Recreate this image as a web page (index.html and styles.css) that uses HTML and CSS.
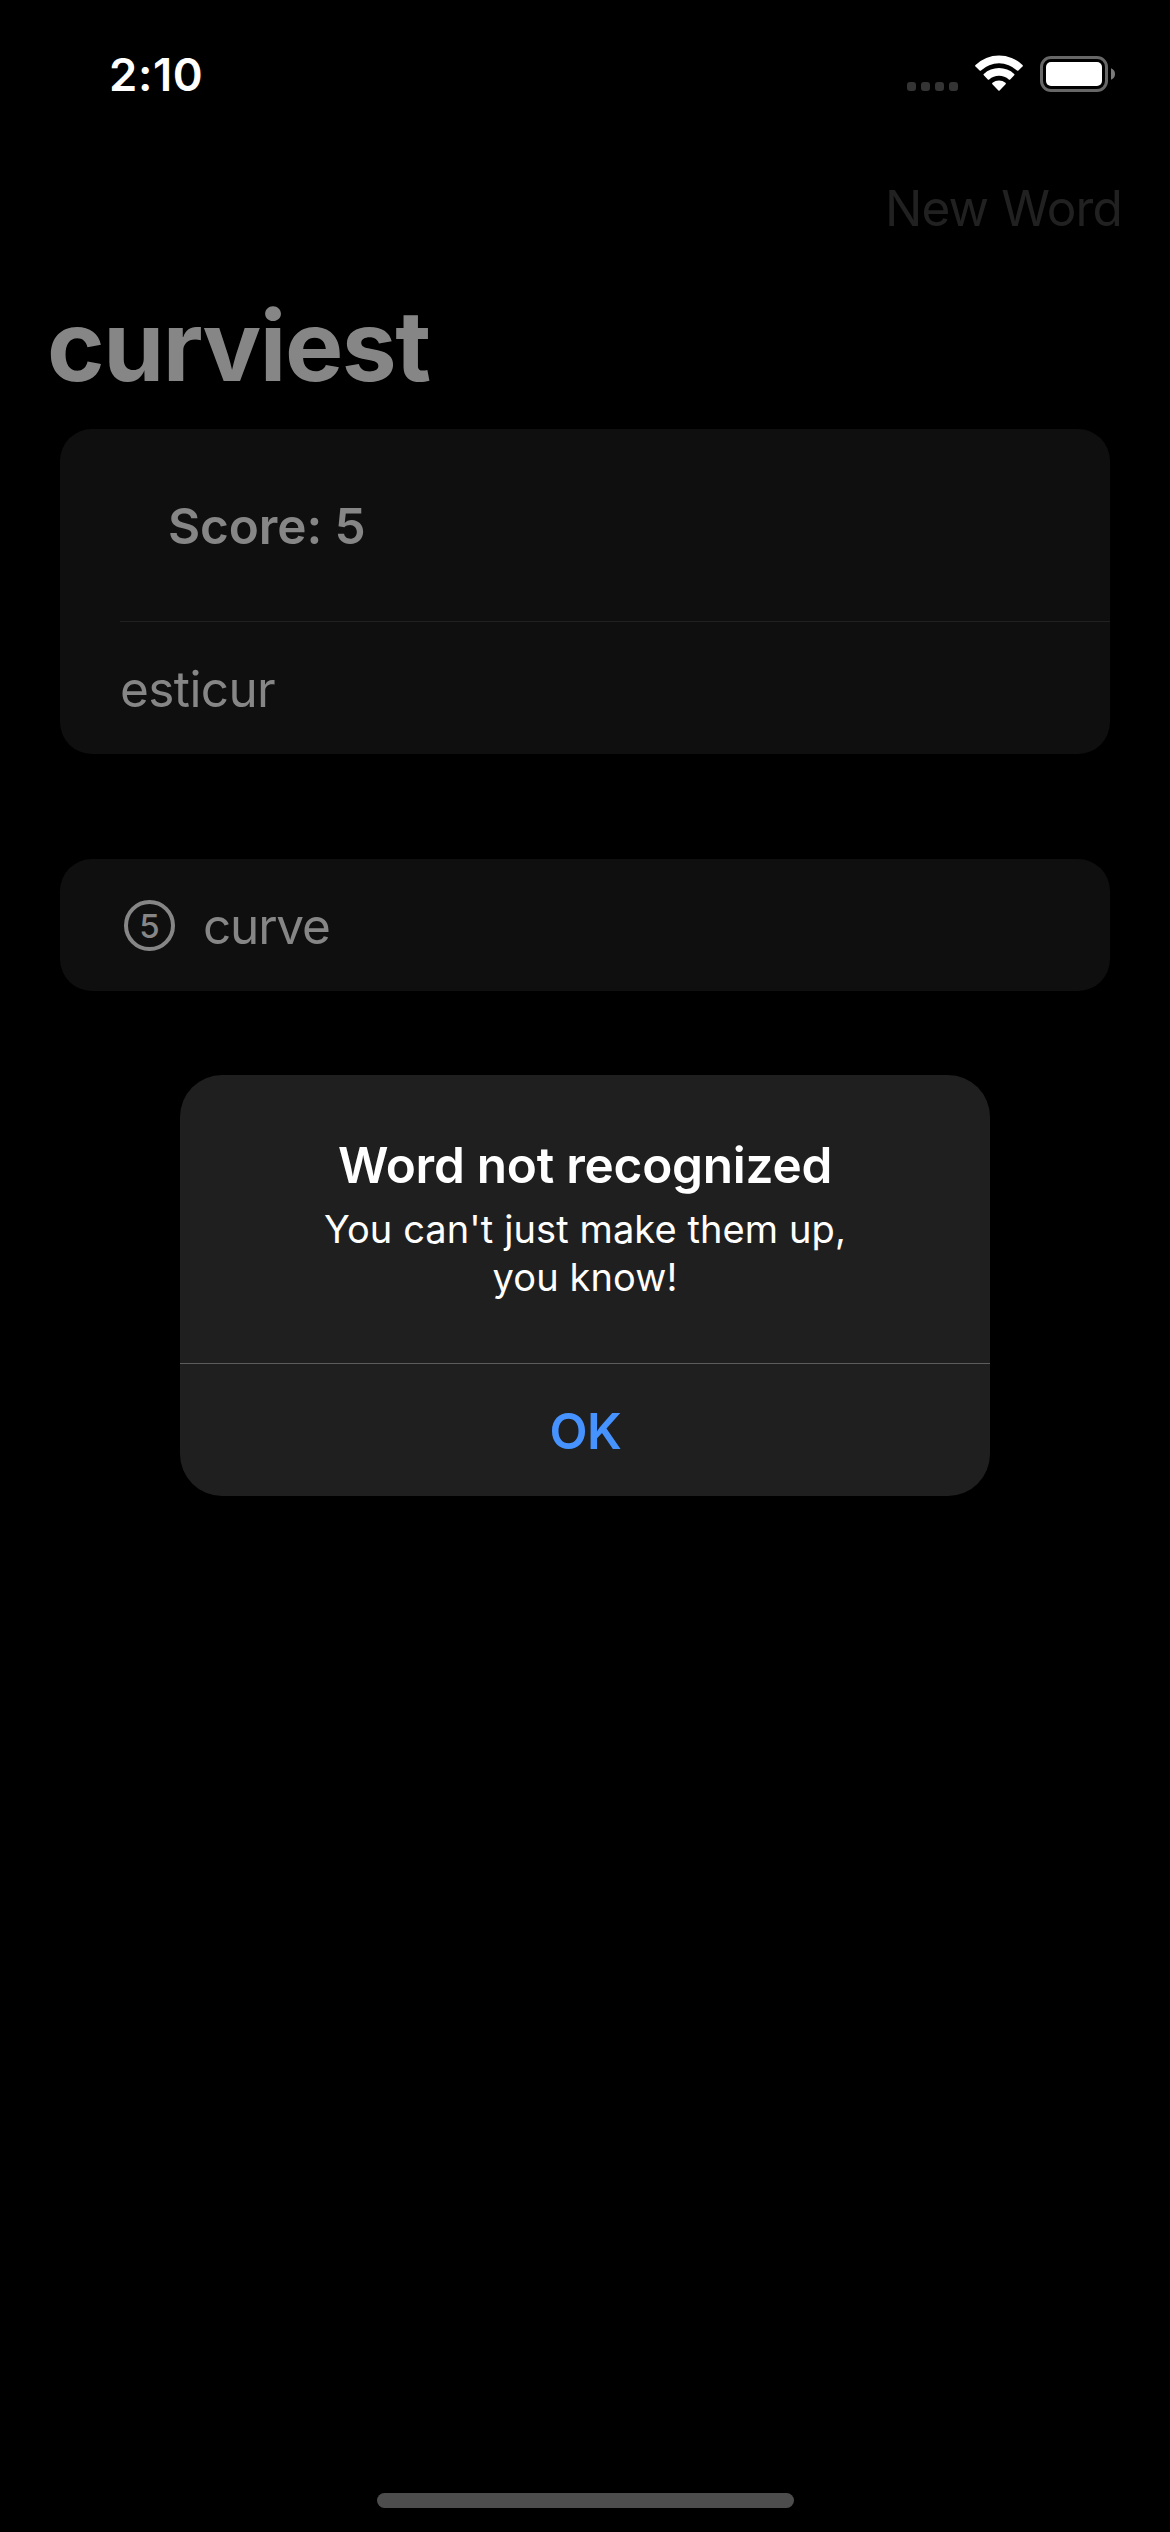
FILE: index.html
```
<!DOCTYPE html>
<html lang="en">
<head>
<meta charset="utf-8">
<title>curviest</title>
<link rel="stylesheet" href="styles.css">
</head>
<body>
<div class="screen">
  <header class="status">
    <span class="time">2:10</span>
    <div class="indicators">
      <div class="dots"><i></i><i></i><i></i><i></i></div>
      <svg class="wifi" width="50" height="38" viewBox="0 0 50 38">
        <path d="M1.5 12.6Q.6 11.8 1.5 11A34 34 0 0 1 48.5 11Q49.4 11.8 48.5 12.6L44.4 16.5Q43.7 17 43 16.4A26.5 26.5 0 0 0 7 16.4Q6.3 17 5.6 16.5Z"/>
        <path d="M9.8 21.3Q9 20.6 9.8 19.9A22.5 22.5 0 0 1 40.2 19.9Q41 20.6 40.2 21.3L36.2 25.4Q35.5 26 34.8 25.5A14.8 14.8 0 0 0 15.2 25.5Q14.5 26 13.8 25.4Z"/>
        <path d="M18.4 30.2Q17.6 29.4 18.5 28.7A10.8 10.8 0 0 1 31.5 28.7Q32.4 29.4 31.6 30.2L25.6 36.4Q25 37 24.4 36.4Z"/>
      </svg>
      <svg class="battery" width="76" height="36" viewBox="0 0 76 36">
        <rect x="1.5" y="1.5" width="65" height="33" rx="9.5" fill="none" stroke="#676767" stroke-width="3"/>
        <rect x="6" y="6" width="56" height="24" rx="5" fill="#fff"/>
        <path d="M71 12.2Q75 13.8 75 18T71 23.8Z" fill="#7a7a7a"/>
      </svg>
    </div>
  </header>
  <nav class="nav"><span>New Word</span></nav>
  <h1 class="title">curviest</h1>
  <main class="list">
    <section class="card">
      <div class="row score">Score: 5</div>
      <div class="row entry">esticur</div>
    </section>
    <section class="card">
      <div class="row word">
        <span class="count">5</span>
        <span class="label">curve</span>
      </div>
    </section>
  </main>
  <div class="home"></div>
  <div class="alert" role="alertdialog">
    <div class="alert-body">
      <h2>Word not recognized</h2>
      <p>You can't just make them up,<br>you know!</p>
    </div>
    <button class="ok">OK</button>
  </div>
</div>
</body>
</html>
```
FILE: styles.css
```
* { box-sizing: border-box; }
body {
  margin: 0;
  background: #000;
  color: #868686;
  font-family: Inter, "Liberation Sans", sans-serif;
  font-size: 49.5px;
}
.screen {
  position: relative;
  display: flex;
  flex-direction: column;
  width: 1170px;
  height: 2532px;
  overflow: hidden;
}
.status {
  display: flex;
  justify-content: space-between;
  height: 141px;
  padding: 54px 54px 0 109px;
  color: #fff;
}
.time {
  font-size: 45.4px;
  font-weight: 600;
  line-height: 41px;
  letter-spacing: .6px;
}
.indicators { display: flex; align-items: flex-start; }
.dots { display: flex; gap: 5px; margin: 28px 16px 0 0; }
.dots i { width: 9px; height: 9px; border-radius: 3px; background: #343434; }
.wifi { margin-right: 16px; fill: #fff; }
.battery { margin-top: 2px; }
.nav {
  height: 134px;
  padding-right: 48px;
  color: #212121;
  line-height: 134px;
  letter-spacing: -.85px;
  text-align: right;
}
.title {
  height: 154px;
  margin: 0;
  padding-left: 47px;
  font-size: 98px;
  font-weight: 700;
  line-height: 141px;
  letter-spacing: -1.5px;
}
.list {
  display: flex;
  flex-direction: column;
  gap: 105px;
  padding: 0 60px;
}
.card { border-radius: 32px; background: #0f0f0f; }
.row { padding-left: 60px; line-height: 132px; letter-spacing: -.6px; }
.score {
  height: 193px;
  margin-left: 60px;
  padding: 0 0 0 48px;
  border-bottom: 1px solid #212121;
  font-weight: 600;
  line-height: 194px;
  letter-spacing: -.1px;
}
.entry { line-height: 134px; height: 132px; }
.word { display: flex; align-items: center; height: 132px; padding-left: 64px; letter-spacing: -1.2px; }
.count {
  width: 51px;
  height: 51px;
  border: 4px solid #868686;
  border-radius: 50%;
  font-size: 33px;
  font-weight: 500;
  line-height: 44px;
  letter-spacing: 0;
  text-align: center;
}
.label { margin-left: 28px; padding-top: 2px; }
.home {
  width: 417px;
  height: 15px;
  margin: auto auto 24px 377px;
  border-radius: 8px;
  background: #4d4d4d;
}
.alert {
  position: absolute;
  top: 1075px;
  left: 180px;
  width: 810px;
  overflow: hidden;
  border-radius: 42px;
  background: #1f1f1f;
  color: #fff;
  text-align: center;
}
.alert-body { height: 289px; padding-top: 60px; border-bottom: 1px solid #5c5c5c; }
.alert h2 {
  margin: 0;
  font-size: 49.5px;
  font-weight: 600;
  line-height: 60px;
  letter-spacing: -.24px;
}
.alert p { margin: 10px 0 0; font-size: 38px; line-height: 48px; letter-spacing: .1px; }
.ok {
  display: block;
  width: 100%;
  height: 132px;
  padding: 2px 0 0 1px;
  border: 0;
  background: none;
  color: #4693ff;
  font: 600 49.5px/130px Inter, "Liberation Sans", sans-serif;
  letter-spacing: -.5px;
}
```
